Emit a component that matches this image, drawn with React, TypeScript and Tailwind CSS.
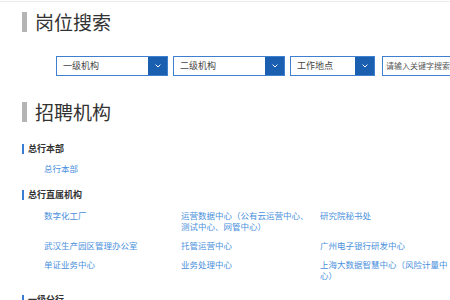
import React from "react";

const font = { fontFamily: '"Noto Sans CJK SC", "Noto Sans", sans-serif' };

function Select({ label, w }: { label: string; w: string }) {
  return (
    <div className={`flex h-[20px] shrink-0 ${w} border border-[#3f7fcf] bg-white`}>
      <div className="flex flex-1 items-center pl-[6px] text-[9px] text-[#444]">{label}</div>
      <div className="flex w-[19px] items-center justify-center bg-[#1b5fb0]">
        <svg width="6" height="4" viewBox="0 0 6 4" fill="none">
          <path d="M0.6 0.6 L3 3 L5.4 0.6" stroke="white" strokeWidth="1" />
        </svg>
      </div>
    </div>
  );
}

function Title({ text }: { text: string }) {
  return (
    <div className="flex items-center pl-[22px]">
      <div className="h-[20px] w-[5px] bg-[#b4b4b4]" />
      <div className="ml-[8px] text-[19px] leading-[22px] text-[#333]">{text}</div>
    </div>
  );
}

function Header({ text }: { text: string }) {
  return (
    <div className="flex items-center pl-[22px]">
      <div className="h-[10px] w-[2px] bg-[#3a7dd6]" />
      <div className="ml-[4px] text-[9px] font-bold leading-[11px] text-[#333]">{text}</div>
    </div>
  );
}

const L = ({ children }: { children: React.ReactNode }) => (
  <div className="w-[130px] text-[8.5px] leading-[11px] text-[#4a90dc]">{children}</div>
);

export default function App() {
  return (
    <div className="h-[300px] w-[450px] overflow-hidden bg-white" style={font}>
      <div className="mt-[1px] h-px bg-[#ececec]" />
      <div className="mt-[9px]">
        <Title text="岗位搜索" />
      </div>
      <div className="mt-[23px] flex pl-[56px]">
        <Select label="一级机构" w="w-[112px]" />
        <div className="ml-[5px] shrink-0">
          <Select label="二级机构" w="w-[112px]" />
        </div>
        <div className="ml-[5px] shrink-0">
          <Select label="工作地点" w="w-[85px]" />
        </div>
        <div className="ml-[7px] flex h-[20px] w-[90px] shrink-0 items-center border border-[#3f7fcf] pl-[3px] text-[8px] text-[#555] whitespace-nowrap">
          请输入关键字搜索
        </div>
      </div>
      <div className="mt-[25px]">
        <Title text="招聘机构" />
      </div>
      <div className="mt-[20px]">
        <Header text="总行本部" />
      </div>
      <div className="mt-[9px] pl-[44px]">
        <L>总行本部</L>
      </div>
      <div className="mt-[15px]">
        <Header text="总行直属机构" />
      </div>
      <div className="mt-[10px] grid grid-cols-[137px_139px_130px] gap-y-[8px] pl-[44px]">
        <L>数字化工厂</L>
        <L>运营数据中心（公有云运营中心、测试中心、网管中心）</L>
        <L>研究院秘书处</L>
        <L>武汉生产园区管理办公室</L>
        <L>托管运营中心</L>
        <L>广州电子银行研发中心</L>
        <L>单证业务中心</L>
        <L>业务处理中心</L>
        <L>上海大数据智慧中心（风险计量中心）</L>
      </div>
      <div className="mt-[13px]">
        <Header text="一级分行" />
      </div>
    </div>
  );
}
